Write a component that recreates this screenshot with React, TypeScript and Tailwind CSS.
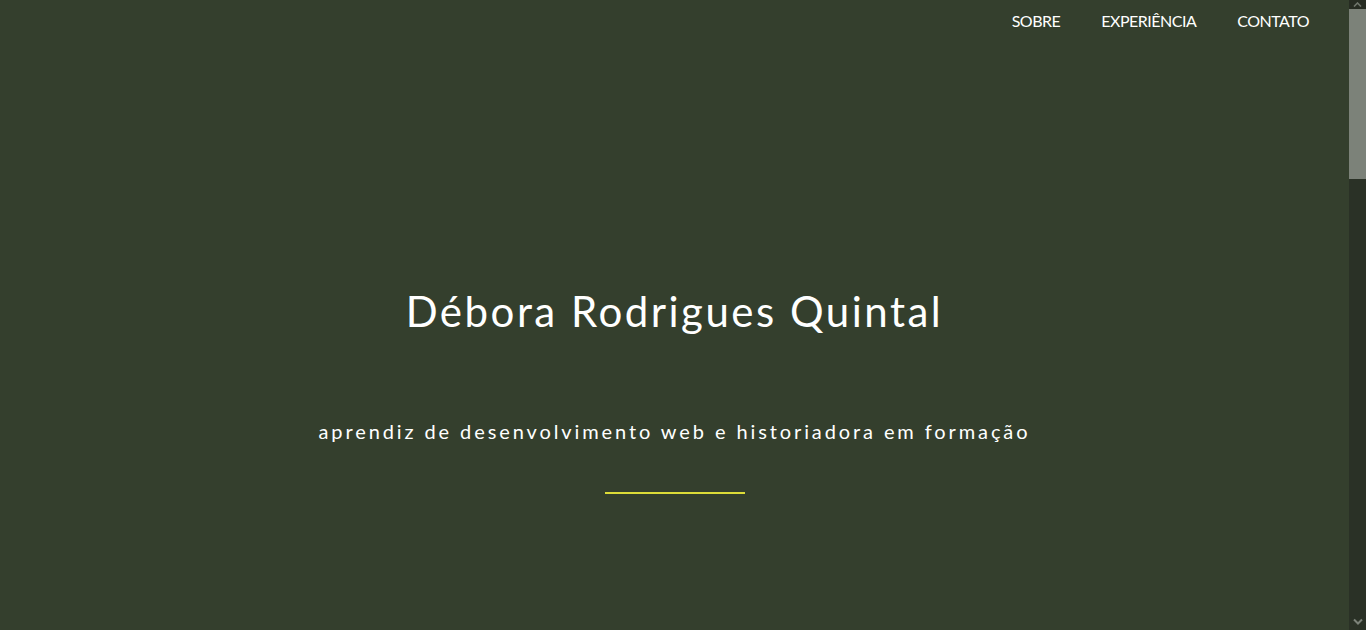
import React from 'react';

const links = ['SOBRE', 'EXPERIÊNCIA', 'CONTATO'];

function Scrollbar() {
  return (
    <aside className="flex w-[17px] shrink-0 flex-col bg-[#2a3126]">
      <div className="flex h-[9px] items-end justify-center bg-[#262c22]">
        <svg width="9" height="5" viewBox="0 0 9 5" className="mb-[2px]">
          <path d="M1 4.5 L4.5 1 L8 4.5" fill="none" stroke="#6f756b" strokeWidth="1.6" />
        </svg>
      </div>
      <div className="h-[170px] bg-[#7c8279]" />
      <div className="flex-1" />
      <div className="flex h-[17px] items-center justify-center">
        <svg width="10" height="7" viewBox="0 0 10 7">
          <path d="M1 1.5 L5 5.5 L9 1.5" fill="none" stroke="#7c8279" strokeWidth="2" />
        </svg>
      </div>
    </aside>
  );
}

export default function App() {
  return (
    <div className="flex h-screen overflow-hidden bg-[#343f2d] text-white font-['Lato','Noto_Sans',sans-serif]">
      <main className="flex-1">
        <header className="flex justify-end gap-[41px] pr-10 pt-[11px]">
          {links.map((l) => (
            <a key={l} href="#" className="text-[16px] leading-5 tracking-[-0.5px]">
              {l}
            </a>
          ))}
        </header>

        <section className="flex flex-col items-center pt-[255px]">
          <h1 className="text-[42px] leading-[50px] tracking-[2.5px]">Débora Rodrigues Quintal</h1>
          <p className="mt-[81px] text-[20px] leading-7 tracking-[2.9px]">
            aprendiz de desenvolvimento web e historiadora em formação
          </p>
          <div className="mt-[47px] h-[2px] w-[140px] bg-[#dcdc38]" />
        </section>
      </main>
      <Scrollbar />
    </div>
  );
}
